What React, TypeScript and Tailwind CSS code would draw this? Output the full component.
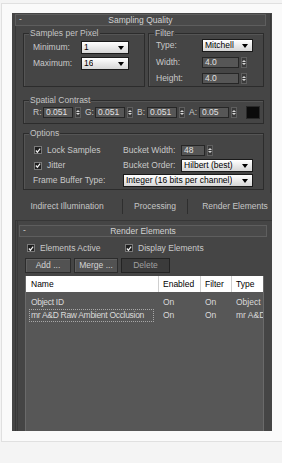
import React from "react";

function Arrows() {
  return (
    <div className="flex h-[11px] w-[6px] flex-col items-center justify-center gap-[1px] border border-[#5e5e5e] bg-[#3a3a3a]">
      <span className="h-0 w-0 border-x-[2px] border-b-[2px] border-x-transparent border-b-[#d8d8d8]" />
      <span className="h-0 w-0 border-x-[2px] border-t-[2px] border-x-transparent border-t-[#d8d8d8]" />
    </div>
  );
}

function Spinner({ value, width }: { value: string; width: string }) {
  return (
    <div className="flex items-center gap-[2px]">
      <div className={`h-[11px] ${width} border border-[#262626] bg-[#565656] pl-[2px] leading-[9px] text-[#e2e2e2]`}>
        {value}
      </div>
      <Arrows />
    </div>
  );
}

function Combo({ value, width }: { value: string; width: string }) {
  return (
    <div className={`flex h-[13px] ${width} items-center justify-between border border-[#1a1a1a] bg-linear-to-b from-white to-[#d6d6d6] pl-[2px] pr-[4px] text-black`}>
      <span className="truncate leading-[11px]">{value}</span>
      <span className="h-0 w-0 shrink-0 border-x-[3.5px] border-t-[4px] border-x-transparent border-t-black" />
    </div>
  );
}

function Check({ label }: { label: string }) {
  return (
    <div className="flex items-center gap-[5px]">
      <span className="flex h-[8px] w-[8px] items-center justify-center border border-[#7a7a7a] bg-[#1f1f1f]">
        <svg width="7" height="7" viewBox="0 0 7 7">
          <path d="M1 3.5 L2.8 5.5 L6 1.2" fill="none" stroke="#f2f2f2" strokeWidth="1.4" />
        </svg>
      </span>
      <span>{label}</span>
    </div>
  );
}

function Group({
  title,
  className,
  children,
}: {
  title: string;
  className: string;
  children: React.ReactNode;
}) {
  return (
    <div className={`relative border border-[#2c2c2c] shadow-[inset_1px_1px_0_#555] ${className}`}>
      <span className="absolute -top-[6px] left-[5px] bg-[#454545] px-[1px] leading-[10px] text-[#c4c4c4]">
        {title}
      </span>
      {children}
    </div>
  );
}

function Header({ title, width }: { title: string; width: string }) {
  return (
    <div className={`relative flex h-[12px] ${width} items-center justify-center border border-[#5e5e5e] bg-[#4a4a4a] leading-[10px] text-[#d2d2d2]`}>
      <span className="absolute left-[3px] top-[-1px] text-[#cfcfcf]">-</span>
      {title}
    </div>
  );
}

function Btn({ label, width, disabled }: { label: string; width: string; disabled?: boolean }) {
  return (
    <div
      className={`flex h-[15px] ${width} items-center justify-center border ${
        disabled ? "border-[#232323] bg-[#3b3b3b] text-[#a0a0a0]" : "border-[#2c2c2c] bg-[#525252] text-[#d4d4d4] shadow-[inset_1px_1px_0_#606060]"
      }`}
    >
      {label}
    </div>
  );
}

const rows = [
  { name: "Object ID", type: "Object" },
  { name: "mr A&D Raw Ambient Occlusion", type: "mr A&D" },
];

export default function App() {
  return (
    <div className="h-[463px] w-[282px] overflow-hidden bg-[#f4f4f4] pt-[3px] font-[family-name:Liberation_Sans,Arial,sans-serif] text-[8.5px]">
      <div className="ml-[1px] h-[439px] w-[281px] border border-r-0 border-[#e0e0e0] bg-[#fafafa] pl-[10px] pt-[9px]">
        <div className="flex h-[418px] w-[260px] flex-col bg-[#454545] text-[#c9c9c9]">
          {/* Sampling Quality rollout */}
          <div className="ml-[3px] mt-[1px] h-[179px] w-[256px] border-r border-[#383838]">
            <Header title="Sampling Quality" width="w-[251px]" />
            <div className="border-l border-[#383838] pl-[7px] pt-[7px]">
              <div className="flex gap-[3px]">
                <Group title="Samples per Pixel" className="h-[54px] w-[122px]">
                  <div className="flex flex-col gap-[3px] pl-[9px] pt-[7px]">
                    <div className="flex items-center">
                      <span className="w-[48px]">Minimum:</span>
                      <Combo value="1" width="w-[48px]" />
                    </div>
                    <div className="flex items-center">
                      <span className="w-[48px]">Maximum:</span>
                      <Combo value="16" width="w-[48px]" />
                    </div>
                  </div>
                </Group>
                <Group title="Filter" className="h-[54px] w-[116px]">
                  <div className="flex flex-col gap-[3px] pl-[7px] pt-[5px]">
                    <div className="flex items-center">
                      <span className="w-[46px]">Type:</span>
                      <Combo value="Mitchell" width="w-[51px]" />
                    </div>
                    <div className="mt-[1px] flex items-center">
                      <span className="w-[46px]">Width:</span>
                      <Spinner value="4.0" width="w-[37px]" />
                    </div>
                    <div className="flex items-center">
                      <span className="w-[46px]">Height:</span>
                      <Spinner value="4.0" width="w-[37px]" />
                    </div>
                  </div>
                </Group>
              </div>

              <Group title="Spatial Contrast" className="mt-[13px] h-[24px] w-[241px]">
                <div className="flex h-full items-center pl-[9px]">
                  {["R:", "G:", "B:", "A:"].map((c, i) => (
                    <div key={c} className="mr-[4px] flex items-center">
                      <span className="w-[10px]">{c}</span>
                      <Spinner value={i === 3 ? "0.05" : "0.051"} width="w-[30px]" />
                    </div>
                  ))}
                  <span className="ml-[5px] h-[13px] w-[14px] border border-[#2a2a2a] bg-[#0b0b0b]" />
                </div>
              </Group>

              <Group title="Options" className="mt-[9px] h-[57px] w-[241px]">
                <div className="flex flex-col pt-[10px]">
                  <div className="flex h-[12px] items-center">
                    <div className="w-[99px] pl-[10px]">
                      <Check label="Lock Samples" />
                    </div>
                    <span className="w-[58px]">Bucket Width:</span>
                    <Spinner value="48" width="w-[24px]" />
                  </div>
                  <div className="mt-[3px] flex h-[13px] items-center">
                    <div className="w-[99px] pl-[10px]">
                      <Check label="Jitter" />
                    </div>
                    <span className="w-[58px]">Bucket Order:</span>
                    <Combo value="Hilbert (best)" width="w-[72px]" />
                  </div>
                  <div className="mt-[2px] flex h-[13px] items-center">
                    <span className="w-[99px] pl-[9px]">Frame Buffer Type:</span>
                    <Combo value="Integer (16 bits per channel)" width="w-[130px]" />
                  </div>
                </div>
              </Group>
            </div>
          </div>

          {/* Tabs */}
          <div className="flex h-[27px] items-center text-[#c6c6c6]">
            <div className="flex w-[110px] justify-center">Indirect Illumination</div>
            <span className="h-[15px] w-px bg-[#2e2e2e]" />
            <div className="flex w-[64px] justify-center">Processing</div>
            <span className="h-[15px] w-px bg-[#2e2e2e]" />
            <div className="flex flex-1 justify-center pl-[10px]">Render Elements</div>
          </div>

          {/* Render Elements rollout */}
          <div className="ml-[3px] flex flex-1 flex-col border-l border-t border-[#373737]">
            <div className="ml-[1px] flex flex-1 flex-col border-l border-[#3a3a3a]">
              <div className="ml-[1px] mt-[4px]">
                <Header title="Render Elements" width="w-[248px]" />
              </div>
              <div className="ml-[9px] mt-[6px] flex h-[10px] items-center">
                <div className="w-[98px]">
                  <Check label="Elements Active" />
                </div>
                <Check label="Display Elements" />
              </div>
              <div className="ml-[7px] mt-[5px] flex gap-[3px]">
                <Btn label="Add ..." width="w-[46px]" />
                <Btn label="Merge ..." width="w-[44px]" />
                <Btn label="Delete" width="w-[49px]" disabled />
              </div>
              <div className="ml-[7px] mt-[3px] flex w-[239px] flex-1 flex-col overflow-hidden border-x border-[#6a6a6a] bg-[#575757]">
                <div className="flex h-[16px] items-center bg-white text-black">
                  <div className="flex h-full w-[133px] items-center border-r border-[#cfcfcf] pl-[5px]">Name</div>
                  <div className="flex h-full w-[42px] items-center border-r border-[#cfcfcf] pl-[4px]">Enabled</div>
                  <div className="flex h-full w-[31px] items-center border-r border-[#cfcfcf] pl-[4px]">Filter</div>
                  <div className="flex h-full flex-1 items-center pl-[4px]">Type</div>
                </div>
                <div className="mt-[4px] flex flex-col text-[#dadada]">
                  {rows.map((r, i) => (
                    <div key={r.name} className="flex h-[13px] items-center">
                      <div className="flex h-full w-[133px] shrink-0 items-center pl-[3px]">
                        <span
                          className={`flex h-full w-[125px] min-w-0 items-center overflow-hidden whitespace-nowrap pl-[1px] tracking-[-0.3px] ${
                            i === 1 ? "border border-dotted border-[#a8a8a8]" : "border border-transparent"
                          }`}
                        >
                          {r.name}
                        </span>
                      </div>
                      <div className="w-[42px] shrink-0 pl-[4px]">On</div>
                      <div className="w-[31px] shrink-0 pl-[4px]">On</div>
                      <div className="min-w-0 flex-1 whitespace-nowrap pl-[4px]">{r.type}</div>
                    </div>
                  ))}
                </div>
              </div>
            </div>
          </div>
        </div>
      </div>
    </div>
  );
}
